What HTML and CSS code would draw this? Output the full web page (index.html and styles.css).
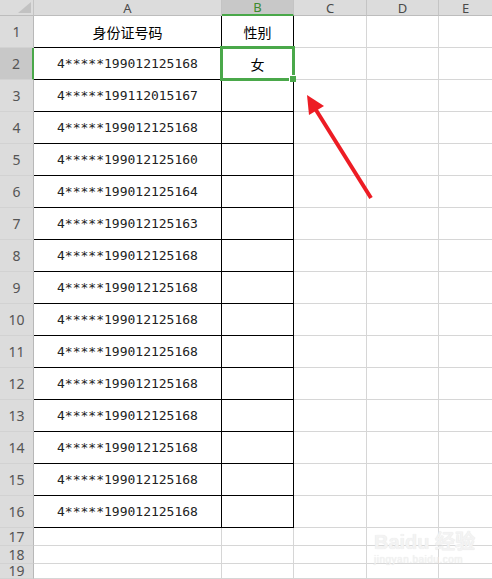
FILE: index.html
```html
<!DOCTYPE html>
<html lang="zh-CN">
<head>
  <meta charset="UTF-8" />
  <title>身份证号码 性别</title>
  <link rel="stylesheet" href="styles.css">
</head>
<body>
  <div class="sheet">
    <!-- column headers -->
    <div class="c h corner"><span class="tri"></span></div>
    <div class="c h">A</div>
    <div class="c h active-col">B</div>
    <div class="c h">C</div>
    <div class="c h">D</div>
    <div class="c h last">E</div>

    <!-- row 1 -->
    <div class="c rh">1</div>
    <div class="c b zh">身份证号码</div>
    <div class="c b zh">性别</div>
    <div class="c"></div><div class="c"></div><div class="c last"></div>

    <!-- row 2 -->
    <div class="c rh active-row">2</div>
    <div class="c b id">4*****199012125168</div>
    <div class="c b zh">女</div>
    <div class="c"></div><div class="c"></div><div class="c last"></div>

    <div class="c rh">3</div>
    <div class="c b id">4*****199112015167</div>
    <div class="c b"></div>
    <div class="c"></div><div class="c"></div><div class="c last"></div>

    <div class="c rh">4</div>
    <div class="c b id">4*****199012125168</div>
    <div class="c b"></div>
    <div class="c"></div><div class="c"></div><div class="c last"></div>

    <div class="c rh">5</div>
    <div class="c b id">4*****199012125160</div>
    <div class="c b"></div>
    <div class="c"></div><div class="c"></div><div class="c last"></div>

    <div class="c rh">6</div>
    <div class="c b id">4*****199012125164</div>
    <div class="c b"></div>
    <div class="c"></div><div class="c"></div><div class="c last"></div>

    <div class="c rh">7</div>
    <div class="c b id">4*****199012125163</div>
    <div class="c b"></div>
    <div class="c"></div><div class="c"></div><div class="c last"></div>

    <div class="c rh">8</div>
    <div class="c b id">4*****199012125168</div>
    <div class="c b"></div>
    <div class="c"></div><div class="c"></div><div class="c last"></div>

    <div class="c rh">9</div>
    <div class="c b id">4*****199012125168</div>
    <div class="c b"></div>
    <div class="c"></div><div class="c"></div><div class="c last"></div>

    <div class="c rh">10</div>
    <div class="c b id">4*****199012125168</div>
    <div class="c b"></div>
    <div class="c"></div><div class="c"></div><div class="c last"></div>

    <div class="c rh">11</div>
    <div class="c b id">4*****199012125168</div>
    <div class="c b"></div>
    <div class="c"></div><div class="c"></div><div class="c last"></div>

    <div class="c rh">12</div>
    <div class="c b id">4*****199012125168</div>
    <div class="c b"></div>
    <div class="c"></div><div class="c"></div><div class="c last"></div>

    <div class="c rh">13</div>
    <div class="c b id">4*****199012125168</div>
    <div class="c b"></div>
    <div class="c"></div><div class="c"></div><div class="c last"></div>

    <div class="c rh">14</div>
    <div class="c b id">4*****199012125168</div>
    <div class="c b"></div>
    <div class="c"></div><div class="c"></div><div class="c last"></div>

    <div class="c rh">15</div>
    <div class="c b id">4*****199012125168</div>
    <div class="c b"></div>
    <div class="c"></div><div class="c"></div><div class="c last"></div>

    <div class="c rh">16</div>
    <div class="c b id">4*****199012125168</div>
    <div class="c b"></div>
    <div class="c"></div><div class="c"></div><div class="c last"></div>

    <div class="c rh">17</div>
    <div class="c"></div><div class="c"></div><div class="c"></div><div class="c"></div><div class="c last"></div>

    <div class="c rh">18</div>
    <div class="c"></div><div class="c"></div><div class="c"></div><div class="c"></div><div class="c last"></div>

    <div class="c rh">19</div>
    <div class="c"></div><div class="c"></div><div class="c"></div><div class="c"></div><div class="c last"></div>

    <!-- selected cell B2 -->
    <div class="selection"><span class="handle"></span></div>

    <!-- red arrow annotation -->
    <svg class="arrow" width="492" height="579" viewBox="0 0 492 579">
      <line x1="371" y1="198" x2="316" y2="110" stroke="#ed1c24" stroke-width="4"/>
      <polygon points="307,95 324,106 309,115" fill="#ed1c24"/>
    </svg>

    <!-- watermark -->
    <div class="watermark">
      <div class="wm-logo">Baidu 经验</div>
      <div class="wm-url">jingyan.baidu.com</div>
    </div>
  </div>
</body>
</html>
```

FILE: styles.css
```css
html, body {
  margin: 0;
  padding: 0;
  background: #ffffff;
}

body {
  width: 492px;
  height: 579px;
  overflow: hidden;
}

.sheet {
  position: relative;
  display: grid;
  grid-template-columns: 34px 188px 72px 73px 72px 1fr;
  grid-template-rows: 16px repeat(16, 32px) 18px 18px 1fr;
  width: 492px;
  height: 579px;
  font-family: "Noto Sans", "Liberation Sans", sans-serif;
}

.c {
  box-sizing: border-box;
  border-right: 1px solid #d6d6d6;
  border-bottom: 1px solid #d6d6d6;
  display: flex;
  align-items: center;
  justify-content: center;
  overflow: hidden;
}

.c.last {
  border-right: none;
}

/* headers */
.h {
  background: #dcdcdc;
  border-right-color: #c4c4c4;
  border-bottom-color: #bdbdbd;
  color: #4a4a4a;
  font-size: 13px;
  line-height: 14px;
}

.corner {
  position: relative;
}

.tri {
  position: absolute;
  right: 2px;
  bottom: 2px;
  width: 0;
  height: 0;
  border-left: 13px solid transparent;
  border-bottom: 11px solid #c2c2c2;
}

.active-col {
  background: #c8c8c8;
  border-bottom: 2px solid #4aa84a;
  color: #3d8a2d;
}

.rh {
  background: #dcdcdc;
  border-right-color: #b8b8b8;
  border-bottom-color: #d2d2d2;
  color: #555;
  font-size: 14px;
  line-height: 14px;
}

.active-row {
  background: #c8c8c8;
  border-right: 2px solid #4aa84a;
}

/* bordered table cells */
.b {
  border-right-color: #000;
  border-bottom-color: #000;
  color: #000;
}

.zh {
  font-family: "Noto Sans CJK SC", "Noto Sans", sans-serif;
  font-size: 14px;
}

.id {
  font-family: "DejaVu Sans Mono", "Liberation Mono", monospace;
  font-size: 13px;
  color: #222;
}

/* selection box on B2 */
.selection {
  position: absolute;
  left: 220px;
  top: 46px;
  width: 75px;
  height: 35px;
  box-sizing: border-box;
  border: 3px solid #4aa84a;
  pointer-events: none;
}

.handle {
  position: absolute;
  right: -4px;
  bottom: -4px;
  width: 6px;
  height: 6px;
  background: #4aa84a;
  border-left: 1px solid #fff;
  border-top: 1px solid #fff;
}

.arrow {
  position: absolute;
  left: 0;
  top: 0;
  pointer-events: none;
}

.watermark {
  position: absolute;
  left: 374px;
  top: 530px;
  color: #f3f3f3;
  font-family: "Liberation Sans", sans-serif;
  text-shadow: 0 0 1px #e2e2e2;
  pointer-events: none;
}

.wm-logo {
  font-size: 20px;
  font-weight: bold;
  line-height: 24px;
}

.wm-url {
  font-size: 10px;
  line-height: 12px;
  letter-spacing: 0.5px;
}
```
